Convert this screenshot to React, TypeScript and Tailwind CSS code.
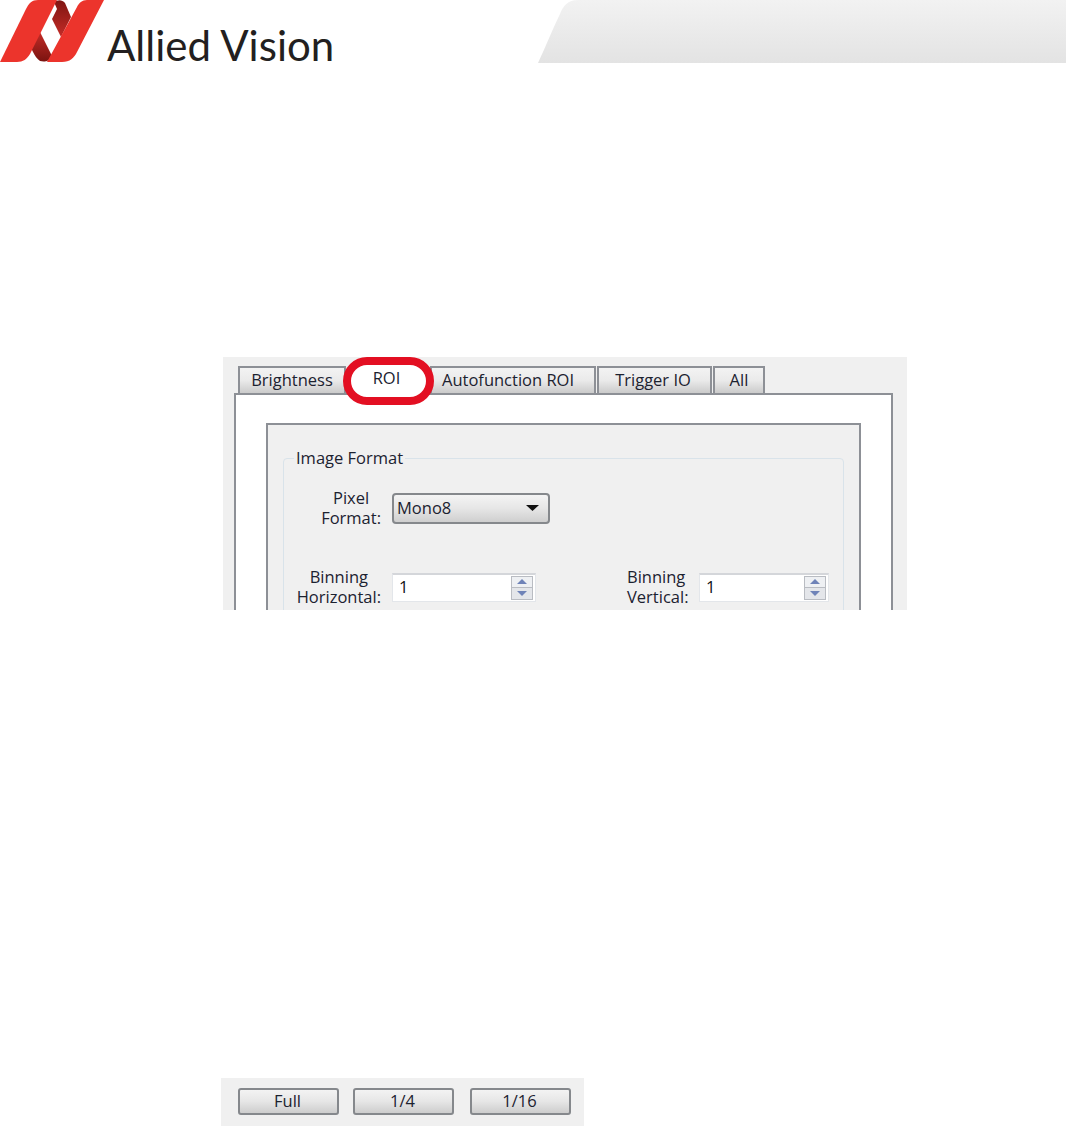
const uiFont = "font-['Open_Sans',sans-serif] text-[16.5px] text-[#1c2230]";

function Logo() {
  return (
    <svg width="105" height="63" viewBox="0 0 105 63" className="shrink-0">
      <defs>
        <linearGradient id="ribbonTop" x1="0" y1="0" x2="0" y2="1">
          <stop offset="0" stopColor="#7f1512" />
          <stop offset="1" stopColor="#c42c27" />
        </linearGradient>
        <linearGradient id="ribbonBottom" x1="0" y1="0" x2="0" y2="1">
          <stop offset="0" stopColor="#c42c27" />
          <stop offset="1" stopColor="#7a1310" />
        </linearGradient>
      </defs>
      <path d="M54 2 C57 0 62 -1 65 3 L71 17 L61 37 L52 19 L57 9 Z" fill="url(#ribbonTop)" />
      <path d="M40 32 L52 56 C49 62 44 62 40 61 C37 59 35 56 33 52 L30 46 Z" fill="url(#ribbonBottom)" />
      <path d="M57 0 L38 0 C32 0 29 3 26 9 L0 62 L17 62 C23 62 27 59 30 54 Z" fill="#ec342c" />
      <path d="M104 0 L87 0 C82 0 79 3 77 7 L47 62 L62 62 C70 62 74 58 77 52 Z" fill="#ec342c" />
    </svg>
  );
}

function HeaderShape() {
  return (
    <svg width="528" height="63" viewBox="0 0 528 63" className="shrink-0">
      <defs>
        <linearGradient id="headerFade" x1="0" y1="0" x2="0" y2="1">
          <stop offset="0" stopColor="#f2f2f2" />
          <stop offset="1" stopColor="#e3e3e3" />
        </linearGradient>
      </defs>
      <path d="M0 63 C8 46 15 28 22 14 C25 6 30 0 40 0 L528 0 L528 63 Z" fill="url(#headerFade)" />
    </svg>
  );
}

function Tab({ label, width, extra = '' }: { label: string; width: string; extra?: string }) {
  return (
    <div
      className={`${width} ${extra} h-[27px] shrink-0 flex items-center justify-center whitespace-nowrap border-2 border-b-0 border-[#8d9096] bg-gradient-to-b from-[#f3f3f3] via-[#eaeaea] to-[#cbcbcb]`}
    >
      {label}
    </div>
  );
}

function SpinBox({ width }: { width: string }) {
  return (
    <div className={`${width} h-[29px] flex items-center justify-between bg-white border border-[#e3e6ea] border-t-2 border-t-[#d4d6da] pl-[6px] pr-[2px]`}>
      <span className="text-[#111]">1</span>
      <div className="w-[22px] h-[24px] flex flex-col border border-[#b9bcc2]">
        <div className="flex-1 flex items-center justify-center bg-[#eef0f3] border-b border-[#b9bcc2]">
          <svg width="10" height="5" viewBox="0 0 10 5"><path d="M5 0 L10 5 L0 5 Z" fill="#6f83b8" /></svg>
        </div>
        <div className="flex-1 flex items-center justify-center bg-[#e4e6ea]">
          <svg width="10" height="5" viewBox="0 0 10 5"><path d="M0 0 L10 0 L5 5 Z" fill="#6f83b8" /></svg>
        </div>
      </div>
    </div>
  );
}

function SizeButton({ label }: { label: string }) {
  return (
    <div className="w-[101px] h-[27px] flex items-center justify-center rounded-[3px] border-2 border-[#85888c] bg-gradient-to-b from-[#f3f3f3] via-[#e6e6e6] to-[#cdcdcd] pr-[2px]">
      {label}
    </div>
  );
}

export default function App() {
  return (
    <div className="w-[1066px] h-[1126px] bg-white overflow-hidden flex flex-col">
      {/* Page header */}
      <div className="h-[63px] flex shrink-0">
        <Logo />
        <div className="w-[225px] ml-[2px] pt-[20px] shrink-0 font-['Lato',sans-serif] font-normal text-[42px] leading-[50px] text-[#231f20] whitespace-nowrap">
          Allied Vision
        </div>
        <div className="flex-1" />
        <HeaderShape />
      </div>

      {/* Tab screenshot */}
      <div className={`${uiFont} ml-[223px] mt-[294px] w-[684px] h-[253px] shrink-0 overflow-hidden bg-[#f0f0f0] pt-[9px]`}>
        <div className="flex pl-[15px] h-[27px]">
          <Tab label="Brightness" width="w-[108px]" />
          <div className="relative w-[84px] shrink-0">
            <div className="absolute left-[-3px] top-[-9px] w-[91px] h-[48px] z-10 flex items-start justify-center pt-[1px] pr-[4px] rounded-[24px] border-[8px] border-[#e30f22] bg-white">
              ROI
            </div>
          </div>
          <Tab label="Autofunction ROI" width="w-[166px]" extra="pr-[10px]" />
          <div className="w-[1px] shrink-0" />
          <Tab label="Trigger IO" width="w-[115px]" extra="pr-[3px]" />
          <div className="w-[1px] shrink-0" />
          <Tab label="All" width="w-[52px]" />
        </div>
        <div className="ml-[11px] w-[659px] h-[400px] border-2 border-[#8d9096] bg-white pt-[28px] pl-[30px] pr-[30px]">
          <div className="h-[300px] border-2 border-[#8d9096] bg-[#f0f0f0] pt-[33px] pl-[15px] pr-[15px]">
            <div className="relative h-[200px] rounded-[4px] border border-[#d9e3ea] pt-[29px]">
              <div className="absolute left-[10px] top-[-10px] bg-[#f0f0f0] px-[2px] leading-[18px]">Image Format</div>

              <div className="flex items-center">
                <div className="w-[97px] flex justify-end">
                  <div className="text-center leading-[20px]">
                    Pixel
                    <br />
                    Format:
                  </div>
                </div>
                <div className="ml-[11px] w-[158px] h-[31px] flex items-center justify-between rounded-[4px] border-2 border-[#85888c] bg-gradient-to-b from-[#f4f4f4] via-[#e6e6e6] to-[#cfcfcf] pl-[3px] pr-[9px]">
                  Mono8
                  <svg width="13" height="6" viewBox="0 0 13 6"><path d="M0 0 L13 0 L6.5 6 Z" fill="#111" /></svg>
                </div>
              </div>

              <div className="flex items-center mt-[39px]">
                <div className="w-[97px] flex justify-end">
                  <div className="text-center leading-[20px]">
                    Binning
                    <br />
                    Horizontal:
                  </div>
                </div>
                <div className="ml-[11px]">
                  <SpinBox width="w-[144px]" />
                </div>
                <div className="ml-[91px] w-[62px] leading-[20px] whitespace-nowrap">
                  Binning
                  <br />
                  Vertical:
                </div>
                <div className="ml-[10px]">
                  <SpinBox width="w-[130px]" />
                </div>
              </div>
            </div>
          </div>
        </div>
      </div>

      {/* Size buttons screenshot */}
      <div className={`${uiFont} ml-[221px] mt-[468px] w-[363px] h-[48px] shrink-0 bg-[#f0f0f0] pt-[10px] pl-[17px] flex gap-[14px] items-start`}>
        <SizeButton label="Full" />
        <SizeButton label="1/4" />
        <div className="ml-[2px]">
          <SizeButton label="1/16" />
        </div>
      </div>
    </div>
  );
}
